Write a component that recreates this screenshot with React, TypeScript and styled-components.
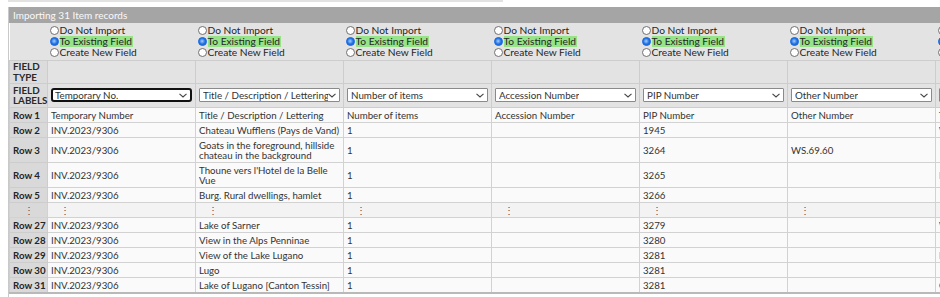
import React, { FC } from 'react'
import styled, { createGlobalStyle } from 'styled-components'

const GlobalStyle = createGlobalStyle`
  body {
    margin: 0;
    overflow: hidden;
    background: #fff;
    font-family: Lato, "Liberation Sans", sans-serif;
    color: #2b2b2b;
  }
`

type SelectProps = { focused?: boolean }
type RadioProps = { checked?: boolean }
type LabelProps = { highlight?: boolean }

const TopStrip = styled.div`
  margin-left: 8px;
  width: 495px;
  height: 2px;
  background: #e2e2e2;
`

const Panel = styled.div`
  margin: 5px 0 0 8px;
  width: 1120px;
  border-left: 1px solid #c9c9c9;
`

const TitleBar = styled.div`
  height: 16px;
  line-height: 16px;
  padding-left: 4px;
  background: #a5a5a5;
  color: #fafafa;
  font-size: 10px;
`

const Grid = styled.table`
  border-collapse: collapse;
  table-layout: fixed;
  width: 1074px;
  font-size: 9.7px;
  border-bottom: 2px solid #b9b9b9;
`

const RadioRow = styled.tr`
  background: #e3e3e3;
  height: 37px;
  border-bottom: 1px solid #cdcdcd;
`

const RadioCell = styled.td`
  padding: 2px 0 0 2px;
  vertical-align: top;
`

const RadioLine = styled.div`
  display: flex;
  align-items: center;
  height: 11.2px;
  line-height: 11px;
  font-size: 10.2px;
  color: #262626;
  white-space: nowrap;
`

const RadioDot = styled.span<RadioProps>`
  flex: none;
  box-sizing: border-box;
  width: 9px;
  height: 9px;
  margin-right: 1px;
  border-radius: 50%;
  border: 1px solid ${({ checked }) => (checked ? '#1b6fe2' : '#707070')};
  background: ${({ checked }) =>
    checked
      ? 'radial-gradient(circle at 45% 45%, #a7ceff 0, #1e6ee0 55%, #1557c4 100%)'
      : '#fff'};
`

const RadioLabel = styled.span<LabelProps>`
  padding: 0 1px 0 0;
  background: ${({ highlight }) => (highlight ? '#96e388' : 'transparent')};
`

const HeadRow = styled.tr<{ h: number }>`
  height: ${({ h }) => h}px;
  background: #e3e3e3;
`

const HeadLabel = styled.th`
  padding: 0 0 0 3px;
  text-align: left;
  font-weight: 700;
  font-size: 9.8px;
  line-height: 10.5px;
  color: #2a2a2a;
  background: #dcdcdc;
  border: 1px solid #cdcdcd;
`

const HeadCell = styled.td`
  padding: 0 3px;
  border: 1px solid #cdcdcd;
`

const FakeSelect = styled.div<SelectProps>`
  box-sizing: border-box;
  display: flex;
  align-items: center;
  justify-content: space-between;
  height: 14px;
  padding: 0 3px 0 ${({ focused }) => (focused ? '2px' : '3px')};
  background: #fff;
  border: ${({ focused }) => (focused ? '2px solid #111' : '1px solid #8a8a8a')};
  border-radius: ${({ focused }) => (focused ? '3px' : '1px')};
  color: #333;
  font-size: 9.8px;
  white-space: nowrap;
  overflow: hidden;

  span {
    overflow: hidden;
  }
`

const DataRow = styled.tr`
  background: #fafafa;
`

const RowLabel = styled.th`
  padding: 2px 0 2px 3px;
  text-align: left;
  font-weight: 700;
  line-height: 10px;
  color: #252525;
  background: #d9d9d9;
  border: 1px solid #cdcdcd;
  white-space: nowrap;
`

const Cell = styled.td`
  padding: 2px 1px 2px 3px;
  line-height: 10px;
  color: #333;
  border: 1px solid #d2d2d2;
  vertical-align: middle;
  overflow: hidden;
`

const Dots = styled.td<{ center?: boolean }>`
  padding: 2px ${({ center }) => (center ? '0' : '12px')};
  line-height: 10px;
  text-align: ${({ center }) => (center ? 'center' : 'left')};
  color: #555;
  background: ${({ center }) => (center ? '#d9d9d9' : '#f3f3f3')};
  border: 1px solid #d2d2d2;
`

const FootLink = styled.div`
  margin: 1px 0 0 10px;
  font-size: 10px;
  color: #4a8fe0;
`

const Chevron: FC = () => (
  <svg width="8" height="5" viewBox="0 0 8 5" style={{ flex: 'none' }}>
    <polyline points="0.5,0.8 4,4 7.5,0.8" fill="none" stroke="#444" strokeWidth="1.1" />
  </svg>
)

const fields = [
  'Temporary No.',
  'Title / Description / Lettering',
  'Number of items',
  'Accession Number',
  'PIP Number',
  'Other Number',
  'Technique',
]

const rows: [string, string[]][] = [
  ['Row 1', ['Temporary Number', 'Title / Description / Lettering', 'Number of items', 'Accession Number', 'PIP Number', 'Other Number', 'Technique']],
  ['Row 2', ['INV.2023/9306', 'Chateau Wufflens (Pays de Vand)', '1', '', '1945', '', 'Watercolour']],
  ['Row 3', ['INV.2023/9306', 'Goats in the foreground, hillside chateau in the background', '1', '', '3264', 'WS.69.60', '']],
  ['Row 4', ['INV.2023/9306', "Thoune vers l'Hotel de la Belle Vue", '1', '', '3265', '', 'Ink']],
  ['Row 5', ['INV.2023/9306', 'Burg. Rural dwellings, hamlet', '1', '', '3266', '', '']],
  ['⋮', []],
  ['Row 27', ['INV.2023/9306', 'Lake of Sarner', '1', '', '3279', '', 'Watercolour']],
  ['Row 28', ['INV.2023/9306', 'View in the Alps Penninae', '1', '', '3280', '', '']],
  ['Row 29', ['INV.2023/9306', 'View of the Lake Lugano', '1', '', '3281', '', 'Ink']],
  ['Row 30', ['INV.2023/9306', 'Lugo', '1', '', '3281', '', '']],
  ['Row 31', ['INV.2023/9306', 'Lake of Lugano [Canton Tessin]', '1', '', '3281', '', 'Graphite']],
]

const App: FC = () => (
  <>
    <GlobalStyle />
    <TopStrip />
    <Panel>
      <TitleBar>Importing 31 Item records</TitleBar>
      <Grid>
        <colgroup>
          <col style={{ width: 38 }} />
          {fields.map((f) => (
            <col key={f} style={{ width: 148 }} />
          ))}
        </colgroup>
        <tbody>
          <RadioRow>
            <td />
            {fields.map((f) => (
              <RadioCell key={f}>
                <RadioLine>
                  <RadioDot />
                  <RadioLabel>Do Not Import</RadioLabel>
                </RadioLine>
                <RadioLine>
                  <RadioDot checked />
                  <RadioLabel highlight>To Existing Field</RadioLabel>
                </RadioLine>
                <RadioLine>
                  <RadioDot />
                  <RadioLabel>Create New Field</RadioLabel>
                </RadioLine>
              </RadioCell>
            ))}
          </RadioRow>
          <HeadRow h={23}>
            <HeadLabel>
              FIELD
              <br />
              TYPE
            </HeadLabel>
            {fields.map((f) => (
              <HeadCell key={f} />
            ))}
          </HeadRow>
          <HeadRow h={24}>
            <HeadLabel>
              FIELD
              <br />
              LABELS
            </HeadLabel>
            {fields.map((f, i) => (
              <HeadCell key={f}>
                <FakeSelect focused={i === 0}>
                  <span>{f}</span>
                  <Chevron />
                </FakeSelect>
              </HeadCell>
            ))}
          </HeadRow>
          {rows.map(([label, values]) =>
            label === '⋮' ? (
              <DataRow key={label}>
                <Dots center>⋮</Dots>
                {fields.map((f) => (
                  <Dots key={f}>⋮</Dots>
                ))}
              </DataRow>
            ) : (
              <DataRow key={label}>
                <RowLabel>{label}</RowLabel>
                {values.map((v, i) => (
                  <Cell key={i}>{v}</Cell>
                ))}
              </DataRow>
            )
          )}
        </tbody>
      </Grid>
      <FootLink>Click here to filter the imported records</FootLink>
    </Panel>
  </>
)

export default App
